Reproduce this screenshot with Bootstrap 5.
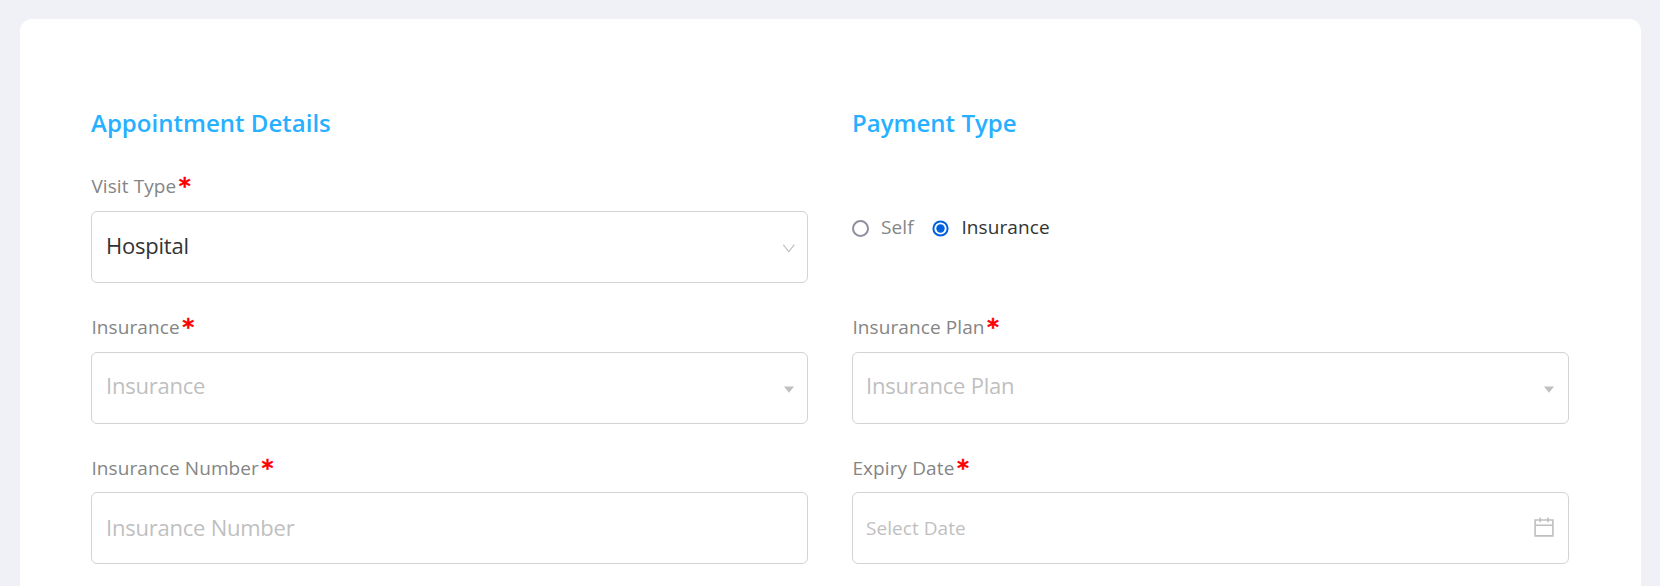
<!DOCTYPE html>
<html lang="en">
<head>
<meta charset="utf-8">
<meta name="viewport" content="width=device-width, initial-scale=1">
<title>Appointment Details</title>
<link rel="stylesheet" href="https://cdn.jsdelivr.net/npm/bootstrap@5.3.0/dist/css/bootstrap.min.css">
<style>
body{background:#f0f1f6;font-family:"Open Sans",sans-serif;height:586px;overflow:hidden}
.sheet{margin:19px 19px 0 20px;padding:80px 72px 0 71px;height:567px;border:0;border-radius:12px 12px 0 0}
.form-row{--bs-gutter-x:44px}
.title{font-size:24px;font-weight:600;line-height:48px;letter-spacing:.02px;color:#27b0ff;margin:0}
.field-label{display:flex;height:26px;font-size:19px;line-height:26px;color:#858585;margin:0 0 12px;padding-left:.4px;letter-spacing:.1px}
.field-label .req{color:#f00;font-family:"DejaVu Sans",sans-serif;font-weight:700;font-size:23px;margin:0 0 0 2.5px;-webkit-text-stroke:.3px #f00}
.field{height:72px;border:1px solid #d3d3d3;border-radius:6px;padding:0 12.5px 2px 14px;font-size:22px;letter-spacing:-.23px;line-height:30px;color:#333;background:#fff}
.ph{color:#bfbfbf}
.date{font-size:19px;letter-spacing:.05px;padding:0 14px 0 13px}
.choice{font-size:19px;line-height:26px;letter-spacing:.1px;color:#858585}
.raised{margin-top:-2px}
.ph .raised{margin-top:-4px}
svg{display:block;flex:none}
</style>
</head>
<body>
<main class="card sheet">
  <div class="row form-row">
    <div class="col-6"><h2 class="title">Appointment Details</h2></div>
    <div class="col-6"><h2 class="title">Payment Type</h2></div>
  </div>
  <div class="row form-row" style="margin-top:26px">
    <div class="col-6">
      <label class="field-label">Visit Type<span class="req">*</span></label>
      <div class="field d-flex align-items-center justify-content-between"><span class="raised">Hospital</span>
        <svg width="12" height="9" style="margin-top:5px" viewBox="0 0 12 9" fill="none" stroke="#bfbfbf" stroke-width="1.2"><path d="M.3.7 5.8 7.8 11.3.7"/></svg>
      </div>
    </div>
    <div class="col-6">
      <div class="choice d-flex align-items-center" style="margin-top:41px">
        <svg width="17" height="17" style="margin-top:2px" viewBox="0 0 17 17"><circle cx="8.5" cy="8.5" r="7.5" fill="#fff" stroke="#8f8f9d" stroke-width="2"/></svg>
        <span style="margin-left:12px">Self</span>
        <svg width="17" height="17" style="margin:2px 0 0 18.7px" viewBox="0 0 17 17"><circle cx="8.5" cy="8.5" r="7.1" fill="#fff" stroke="#0061e0" stroke-width="2"/><circle cx="8.5" cy="8.5" r="4.2" fill="#0061e0"/></svg>
        <span style="margin-left:12px;color:#333">Insurance</span>
      </div>
    </div>
  </div>
  <div class="row form-row" style="margin-top:31px">
    <div class="col-6">
      <label class="field-label">Insurance<span class="req">*</span></label>
      <div class="field ph d-flex align-items-center justify-content-between"><span class="raised">Insurance</span>
        <svg width="10" height="7" style="margin:5px 1px 0 0" viewBox="0 0 10 7"><path d="M0 .5h10L5 6.7z" fill="#bfbfbf"/></svg>
      </div>
    </div>
    <div class="col-6">
      <label class="field-label">Insurance Plan<span class="req">*</span></label>
      <div class="field ph d-flex align-items-center justify-content-between" style="padding-left:13px"><span class="raised">Insurance Plan</span>
        <svg width="10" height="7" style="margin:5px 1.5px 0 0" viewBox="0 0 10 7"><path d="M0 .5h10L5 6.7z" fill="#bfbfbf"/></svg>
      </div>
    </div>
  </div>
  <div class="row form-row" style="margin-top:31px">
    <div class="col-6">
      <label class="field-label" style="margin-bottom:11px">Insurance Number<span class="req">*</span></label>
      <div class="field ph d-flex align-items-center"><span>Insurance Number</span></div>
    </div>
    <div class="col-6">
      <label class="field-label" style="margin-bottom:11px">Expiry Date<span class="req">*</span></label>
      <div class="field ph date d-flex align-items-center justify-content-between"><span>Select Date</span>
        <svg width="20" height="20" style="margin-top:-2px" viewBox="0 0 20 20" fill="none" stroke="#bfbfbf" stroke-width="1.6"><path d="M1.1 3h17.8v15.9H1.1zM1 8.2h18M6.2.5v4.7M14 .5v4.7"/></svg>
      </div>
    </div>
  </div>
</main>
<script src="https://cdn.jsdelivr.net/npm/bootstrap@5.3.0/dist/js/bootstrap.bundle.min.js"></script>
</body>
</html>
